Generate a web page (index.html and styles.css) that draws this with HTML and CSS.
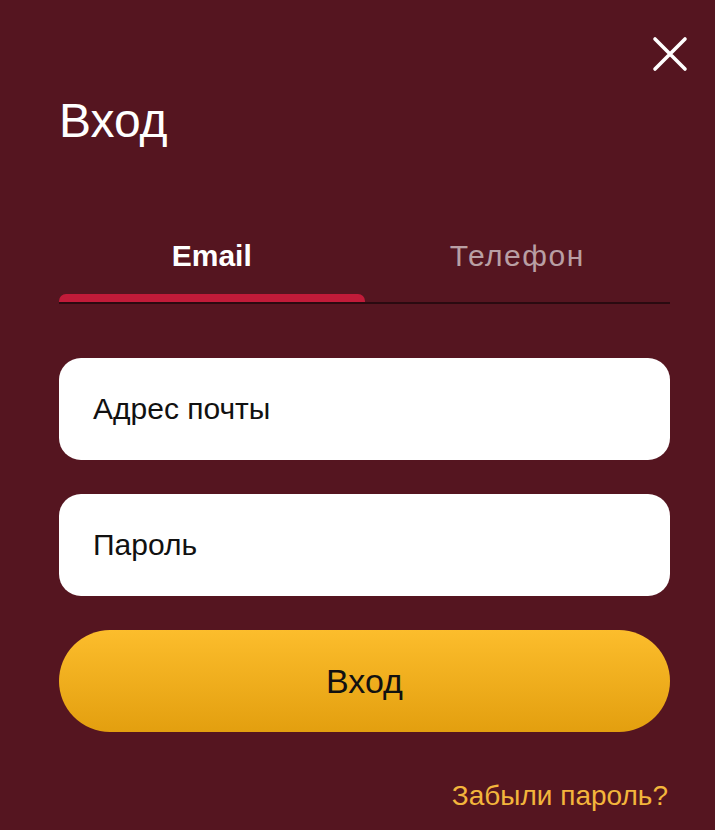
FILE: index.html
```html
<!DOCTYPE html>
<html lang="ru">
<head>
<meta charset="utf-8">
<title>Вход</title>
<link rel="stylesheet" href="styles.css">
</head>
<body>
<div class="modal">
  <button class="close" aria-label="Закрыть">
    <svg width="36" height="36" viewBox="0 0 36 36"><path d="M3 3 L33 33 M33 3 L3 33" stroke="#fff" stroke-width="3.6" stroke-linecap="round" fill="none"/></svg>
  </button>
  <h1 class="title">Вход</h1>
  <div class="tabs">
    <div class="tab tab-active"><span class="tab-label">Email</span><span class="tab-bar"></span></div>
    <div class="tab"><span class="tab-label tab-label-wide">Телефон</span><span class="tab-bar"></span></div>
  </div>
  <form class="form">
    <div class="field"><span class="placeholder">Адрес почты</span></div>
    <div class="field"><span class="placeholder">Пароль</span></div>
    <button type="button" class="submit">Вход</button>
  </form>
  <div class="forgot-row"><a class="forgot" href="#">Забыли пароль?</a></div>
</div>
</body>
</html>
```
FILE: styles.css
```css
html, body {
  margin: 0;
  padding: 0;
  background: #551520;
}
body {
  font-family: "Liberation Sans", Arial, sans-serif;
  width: 715px;
  height: 830px;
  overflow: hidden;
}
.modal {
  position: relative;
  padding: 0 45px 0 59px;
}
.close {
  position: absolute;
  top: 36px;
  right: 27px;
  width: 36px;
  height: 36px;
  padding: 0;
  border: 0;
  background: none;
  display: flex;
}
.title {
  margin: 0;
  padding-top: 97px;
  font-size: 48px;
  line-height: 48px;
  font-weight: 400;
  color: #ffffff;
}
.tabs {
  margin-top: 96px;
  display: grid;
  grid-template-columns: 1fr 1fr;
  border-bottom: 2px solid #2a0a10;
}
.tab {
  display: flex;
  flex-direction: column;
  align-items: stretch;
}
.tab-label {
  text-align: center;
  font-size: 30px;
  line-height: 30px;
  color: rgba(255, 255, 255, 0.6);
  padding-bottom: 23px;
}
.tab-label-wide {
  letter-spacing: 1.5px;
}
.tab-bar {
  height: 8px;
  border-radius: 7px 7px 0 0;
}
.tab-active .tab-label {
  color: #ffffff;
  font-weight: 700;
}
.tab-active .tab-bar {
  background: #c11b39;
}
.form {
  margin: 54px 0 0;
  display: flex;
  flex-direction: column;
  gap: 34px;
}
.field {
  height: 102px;
  background: #ffffff;
  border-radius: 22px;
  display: flex;
  align-items: center;
  padding-left: 34px;
}
.placeholder {
  font-size: 30px;
  color: #111111;
}
.submit {
  height: 102px;
  border: 0;
  border-radius: 51px;
  background: linear-gradient(180deg, #fcbd2c 0%, #e39f0f 100%);
  font-family: "Liberation Sans", Arial, sans-serif;
  font-size: 34px;
  color: #111111;
  padding: 0;
}
.forgot-row {
  display: flex;
  justify-content: flex-end;
  margin-top: 48px;
  padding-right: 2px;
}
.forgot {
  font-size: 28px;
  color: #f3b53c;
  text-decoration: none;
}
```
